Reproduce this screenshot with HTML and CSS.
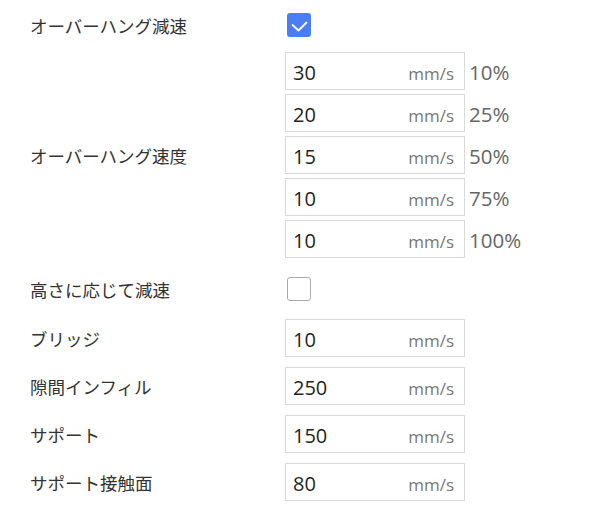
FILE: index.html
```html
<!DOCTYPE html>
<html lang="ja">
<head>
<meta charset="utf-8">
<link rel="stylesheet" href="styles.css">
</head>
<body>
<div class="form">
  <div class="row row-first">
    <div class="label">オーバーハング減速</div>
    <div class="checkbox checked">
      <svg viewBox="0 0 24 24" width="24" height="24"><path d="M5.5 12 L11.5 17.5 L19.5 9.5" fill="none" stroke="#fff" stroke-width="1.8" stroke-linecap="round" stroke-linejoin="round"/></svg>
    </div>
  </div>
  <div class="row row-group">
    <div class="label">オーバーハング速度</div>
    <div class="group">
      <div class="line"><div class="input"><span class="val">30</span><span class="unit">mm/s</span></div><span class="pct">10%</span></div>
      <div class="line"><div class="input"><span class="val">20</span><span class="unit">mm/s</span></div><span class="pct">25%</span></div>
      <div class="line"><div class="input"><span class="val">15</span><span class="unit">mm/s</span></div><span class="pct">50%</span></div>
      <div class="line"><div class="input"><span class="val">10</span><span class="unit">mm/s</span></div><span class="pct">75%</span></div>
      <div class="line"><div class="input"><span class="val">10</span><span class="unit">mm/s</span></div><span class="pct">100%</span></div>
    </div>
  </div>
  <div class="row row-check">
    <div class="label">高さに応じて減速</div>
    <div class="checkbox"></div>
  </div>
  <div class="row row-speed">
    <div class="label">ブリッジ</div>
    <div class="input"><span class="val">10</span><span class="unit">mm/s</span></div>
  </div>
  <div class="row row-speed">
    <div class="label">隙間インフィル</div>
    <div class="input"><span class="val">250</span><span class="unit">mm/s</span></div>
  </div>
  <div class="row row-speed">
    <div class="label">サポート</div>
    <div class="input"><span class="val">150</span><span class="unit">mm/s</span></div>
  </div>
  <div class="row row-speed">
    <div class="label">サポート接触面</div>
    <div class="input"><span class="val">80</span><span class="unit">mm/s</span></div>
  </div>
</div>
</body>
</html>
```

FILE: styles.css
```css
html, body {
  margin: 0;
  padding: 0;
  background: #ffffff;
}

body {
  font-family: "Open Sans", "Noto Sans CJK JP", sans-serif;
  color: #222;
}

.form {
  padding-left: 30px;
}

.row {
  display: flex;
  align-items: center;
}

.label {
  width: 255px;
  flex: none;
  font-family: "Noto Sans CJK JP", sans-serif;
  font-size: 17.5px;
  color: #333;
  line-height: 22px;
  padding-top: 2px;
}

.row-first {
  height: 50px;
}

.row-group {
  padding: 2px 0 7px;
}

.row-check {
  padding: 12px 0;
}

.row-speed {
  padding: 6px 0 4px;
}

.checkbox {
  width: 24px;
  height: 24px;
  box-sizing: border-box;
  border: 1.5px solid #aaaaaa;
  border-radius: 3px;
  margin-left: 2px;
  background: #fff;
}

.checkbox.checked {
  border: none;
  background: #4b7df6;
}

.checkbox svg {
  display: block;
}

.group {
  display: flex;
  flex-direction: column;
  gap: 4px;
}

.line {
  display: flex;
  align-items: center;
}

.input {
  width: 180px;
  height: 38px;
  box-sizing: border-box;
  border: 1px solid #d9d9d9;
  display: flex;
  align-items: baseline;
  justify-content: space-between;
  padding: 3px 10px 0 7px;
  line-height: 33px;
}

.val {
  font-size: 20px;
  color: #1f1f1f;
}

.unit {
  font-size: 17px;
  color: #777;
}

.pct {
  font-size: 20.5px;
  color: #666;
  margin-left: 4px;
  line-height: 1;
  padding-top: 2px;
}
```
